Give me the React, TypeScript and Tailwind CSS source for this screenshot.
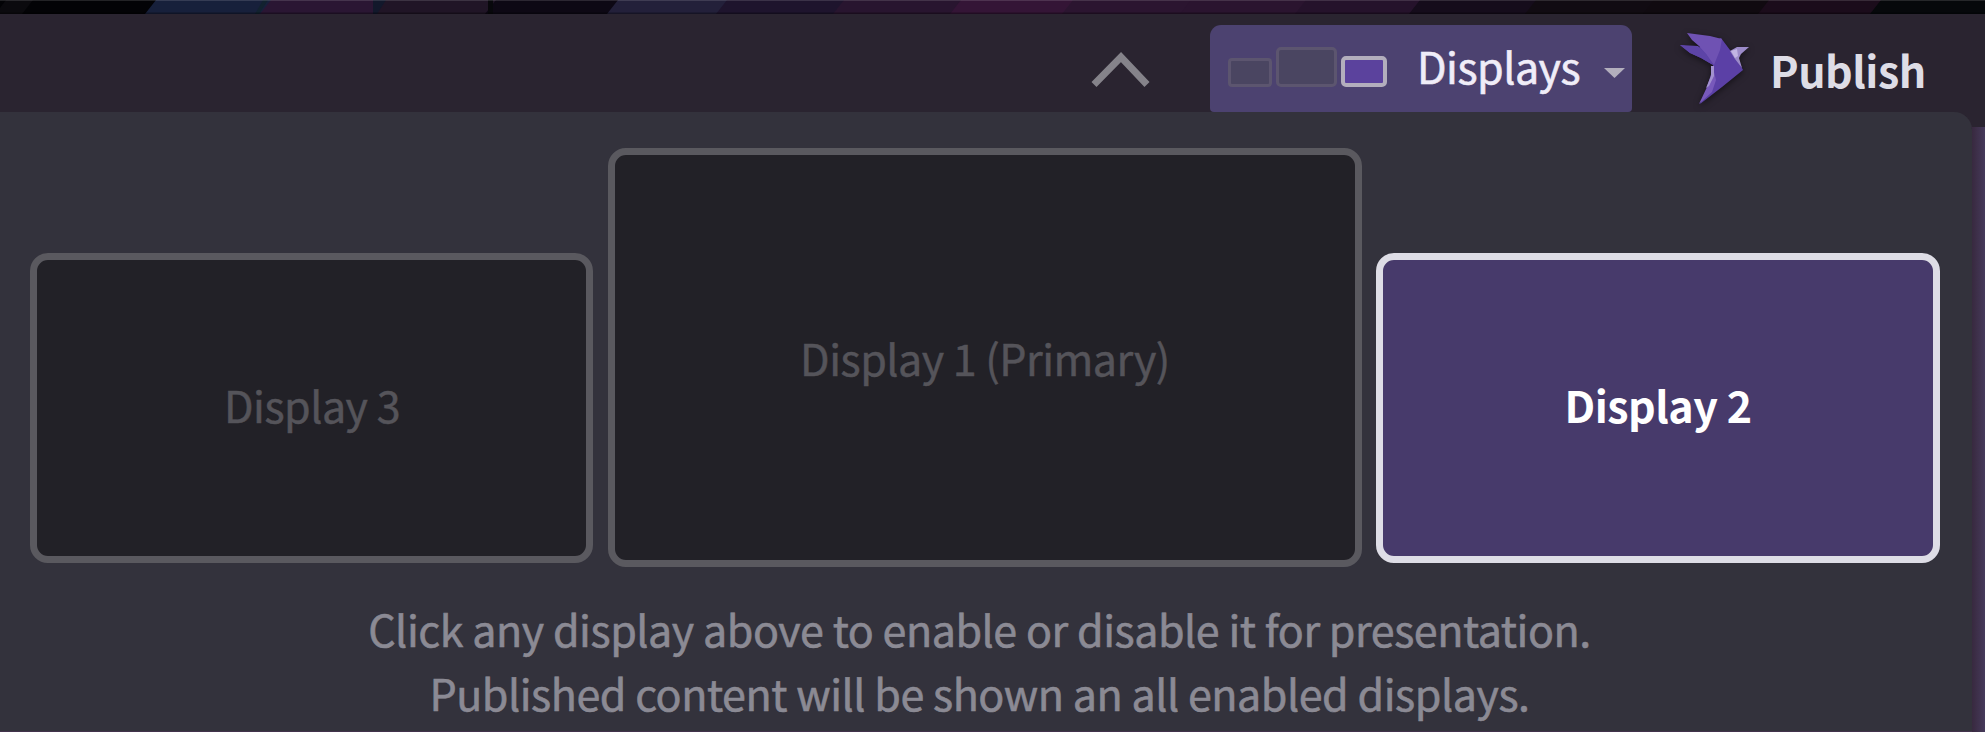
import React from "react";

const strip = [
  { x: 0, w: 27, c: "#0b0a0e" },
  { x: 27, w: 123, c: "#030306" },
  { x: 150, w: 115, c: "#17203b" },
  { x: 265, w: 113, c: "#2a1633" },
  { x: 378, w: 112, c: "#201526" },
  { x: 490, w: 122, c: "#0d0814" },
  { x: 612, w: 109, c: "#23203a" },
  { x: 721, w: 117, c: "#1e142d" },
  { x: 838, w: 117, c: "#28152f" },
  { x: 955, w: 112, c: "#341536" },
  { x: 1067, w: 118, c: "#2b1530" },
  { x: 1185, w: 115, c: "#2a142f" },
  { x: 1300, w: 114, c: "#25122b" },
  { x: 1414, w: 116, c: "#150c1b" },
  { x: 1530, w: 118, c: "#110b12" },
  { x: 1648, w: 115, c: "#100a10" },
  { x: 1763, w: 112, c: "#1b0c1b" },
  { x: 1875, w: 120, c: "#06080b" },
];

function Backdrop() {
  return (
    <svg className="block h-[14px] w-full shrink-0 bg-[#030306]" viewBox="0 0 1985 14" preserveAspectRatio="none">
      {strip.map((s) => (
        <polygon key={s.x} fill={s.c} points={`${s.x + 6},0 ${s.x + s.w + 10},0 ${s.x + s.w},14 ${s.x - 5},14`} />
      ))}
      <polygon points="268,0 263,0 255,14 259,14" fill="#12222f" />
      <polygon points="386,0 373,0 373,14 377,14" fill="#12182b" />
      <rect x="488" width="5" height="14" fill="#08080c" />
      <rect width="1985" height="1" fill="#ffffff" opacity="0.13" />
      <rect y="12.5" width="1985" height="1.5" fill="#000000" opacity="0.35" />
    </svg>
  );
}

function Bird() {
  return (
    <svg className="h-[76px] w-[72px] shrink-0 drop-shadow-[0_2px_3px_rgba(0,0,0,0.5)]" viewBox="1679 30 72 76">
      <polygon fill="#5b40a6" points="1680,45 1698,48 1721,38 1730,50 1737,58 1743,70 1722,87 1700,104 1713,78 1713,65 1701,58 1690,53" />
      <polygon fill="#6f52b3" points="1687,33 1710,36 1722,39 1720,50 1714,65 1706,54 1699,46 1692,40" />
      <polygon fill="#5d44a7" points="1680,45 1698,46 1706,54 1713,65 1701,58 1690,53" />
      <polygon fill="#7859bb" points="1713,68 1716,80 1712,92 1699,104 1707,87" />
      <polygon fill="#a291d0" points="1711,66 1714,66 1714,76 1709,86 1706,88 1711,76" />
      <polygon fill="#9c8bc9" points="1730,51 1737,47 1749,47 1741,54 1739,58 1742,68 1735,59" />
      <polygon fill="#c2b5e4" points="1731,51 1737,49 1738,56 1735,58" />
    </svg>
  );
}

function Header() {
  return (
    <header className="flex h-[98px] w-full shrink-0 items-start bg-[#2a2430]">
      <svg className="mt-[35px] ml-[1089px] h-[40px] w-[64px] shrink-0" viewBox="0 0 64 40" fill="none">
        <path d="M5 35.5 L32 8 L58 35.5" stroke="#85838a" strokeWidth="7" />
      </svg>
      <button className="mt-[11px] ml-[57px] flex h-[87px] w-[422px] shrink-0 items-start rounded-t-[11px] rounded-b-[4px] bg-[#4c4270] text-left">
        <span className="mt-[22px] ml-[18px] flex h-[40px] w-[160px] items-end gap-[4px]">
          <span className="h-[29px] w-[44px] rounded-[4px] border-[3px] border-[#5c556f] bg-[#4a4561]" />
          <span className="h-[40px] w-[61px] rounded-[5px] border-[3px] border-[#5c556f] bg-[#4a4561]" />
          <span className="h-[31px] w-[46px] rounded-[5px] border-4 border-[#b3aebd] bg-[#5b429d]" />
        </span>
        <span className="mt-[8px] ml-[29px] w-[170px] text-[43px] leading-[64px] tracking-[-0.5px] whitespace-nowrap text-[#f0edf8] [-webkit-text-stroke:0.6px_#f0edf8]">Displays</span>
        <svg className="mt-[41px] ml-[15px] h-[14px] w-[24px] shrink-0" viewBox="0 0 24 14">
          <path d="M2 2 H23 L12.5 12 Z" fill="#b3afbd" />
        </svg>
      </button>
      <button className="mt-[16px] ml-[47px] flex h-[80px] shrink-0 items-start">
        <Bird />
        <span className="mt-[7px] ml-[19px] text-[43px] leading-[64px] font-bold tracking-[-0.5px] whitespace-nowrap text-[#dedde6]">Publish</span>
      </button>
    </header>
  );
}

export default function App() {
  return (
    <div className="flex h-[732px] w-[1985px] flex-col overflow-hidden bg-[#2a2430] font-['Noto_Sans_CJK_SC','Noto_Sans',sans-serif]">
      <Backdrop />
      <Header />
      <div className="flex h-[620px] shrink-0">
        <main className="flex w-[1972px] shrink-0 flex-col rounded-tr-[18px] bg-[#33323c] shadow-[inset_0_-1px_0_#42324c]">
          <section className="mt-[36px] ml-[30px] flex h-[419px] items-start text-[43px] leading-[64px] tracking-[-0.5px]">
            <button className="mt-[105px] flex h-[310px] w-[563px] items-center justify-center rounded-[18px] border-[7px] border-[#5a595f] bg-[#222127] pb-[8px] pl-[1px] text-[#55545a] [-webkit-text-stroke:0.5px_#55545a]">
              <span>Display 3</span>
            </button>
            <button className="ml-[15px] flex h-[419px] w-[754px] items-center justify-center rounded-[18px] border-[7px] border-[#5a595f] bg-[#222127] pb-[2px] text-[#55545a] [-webkit-text-stroke:0.5px_#55545a]">
              <span>Display 1 (Primary)</span>
            </button>
            <button className="mt-[105px] ml-[14px] flex h-[310px] w-[564px] items-center justify-center rounded-[18px] border-[7px] border-[#dedde6] bg-[#473a6b] pb-[8px] font-bold text-white">
              <span>Display 2</span>
            </button>
          </section>
          <div className="mt-[29px] flex flex-col items-center pr-[13px] text-[43px] leading-[64px] tracking-[-0.45px] whitespace-nowrap text-[#8b8a94] [-webkit-text-stroke:0.6px_#8b8a94]">
            <p>Click any display above to enable or disable it for presentation.</p>
            <p>Published content will be shown an all enabled displays.</p>
          </div>
        </main>
        <aside className="mt-[15px] w-[13px] bg-linear-to-r from-[#38293f] to-[#463a5b]" />
      </div>
    </div>
  );
}
